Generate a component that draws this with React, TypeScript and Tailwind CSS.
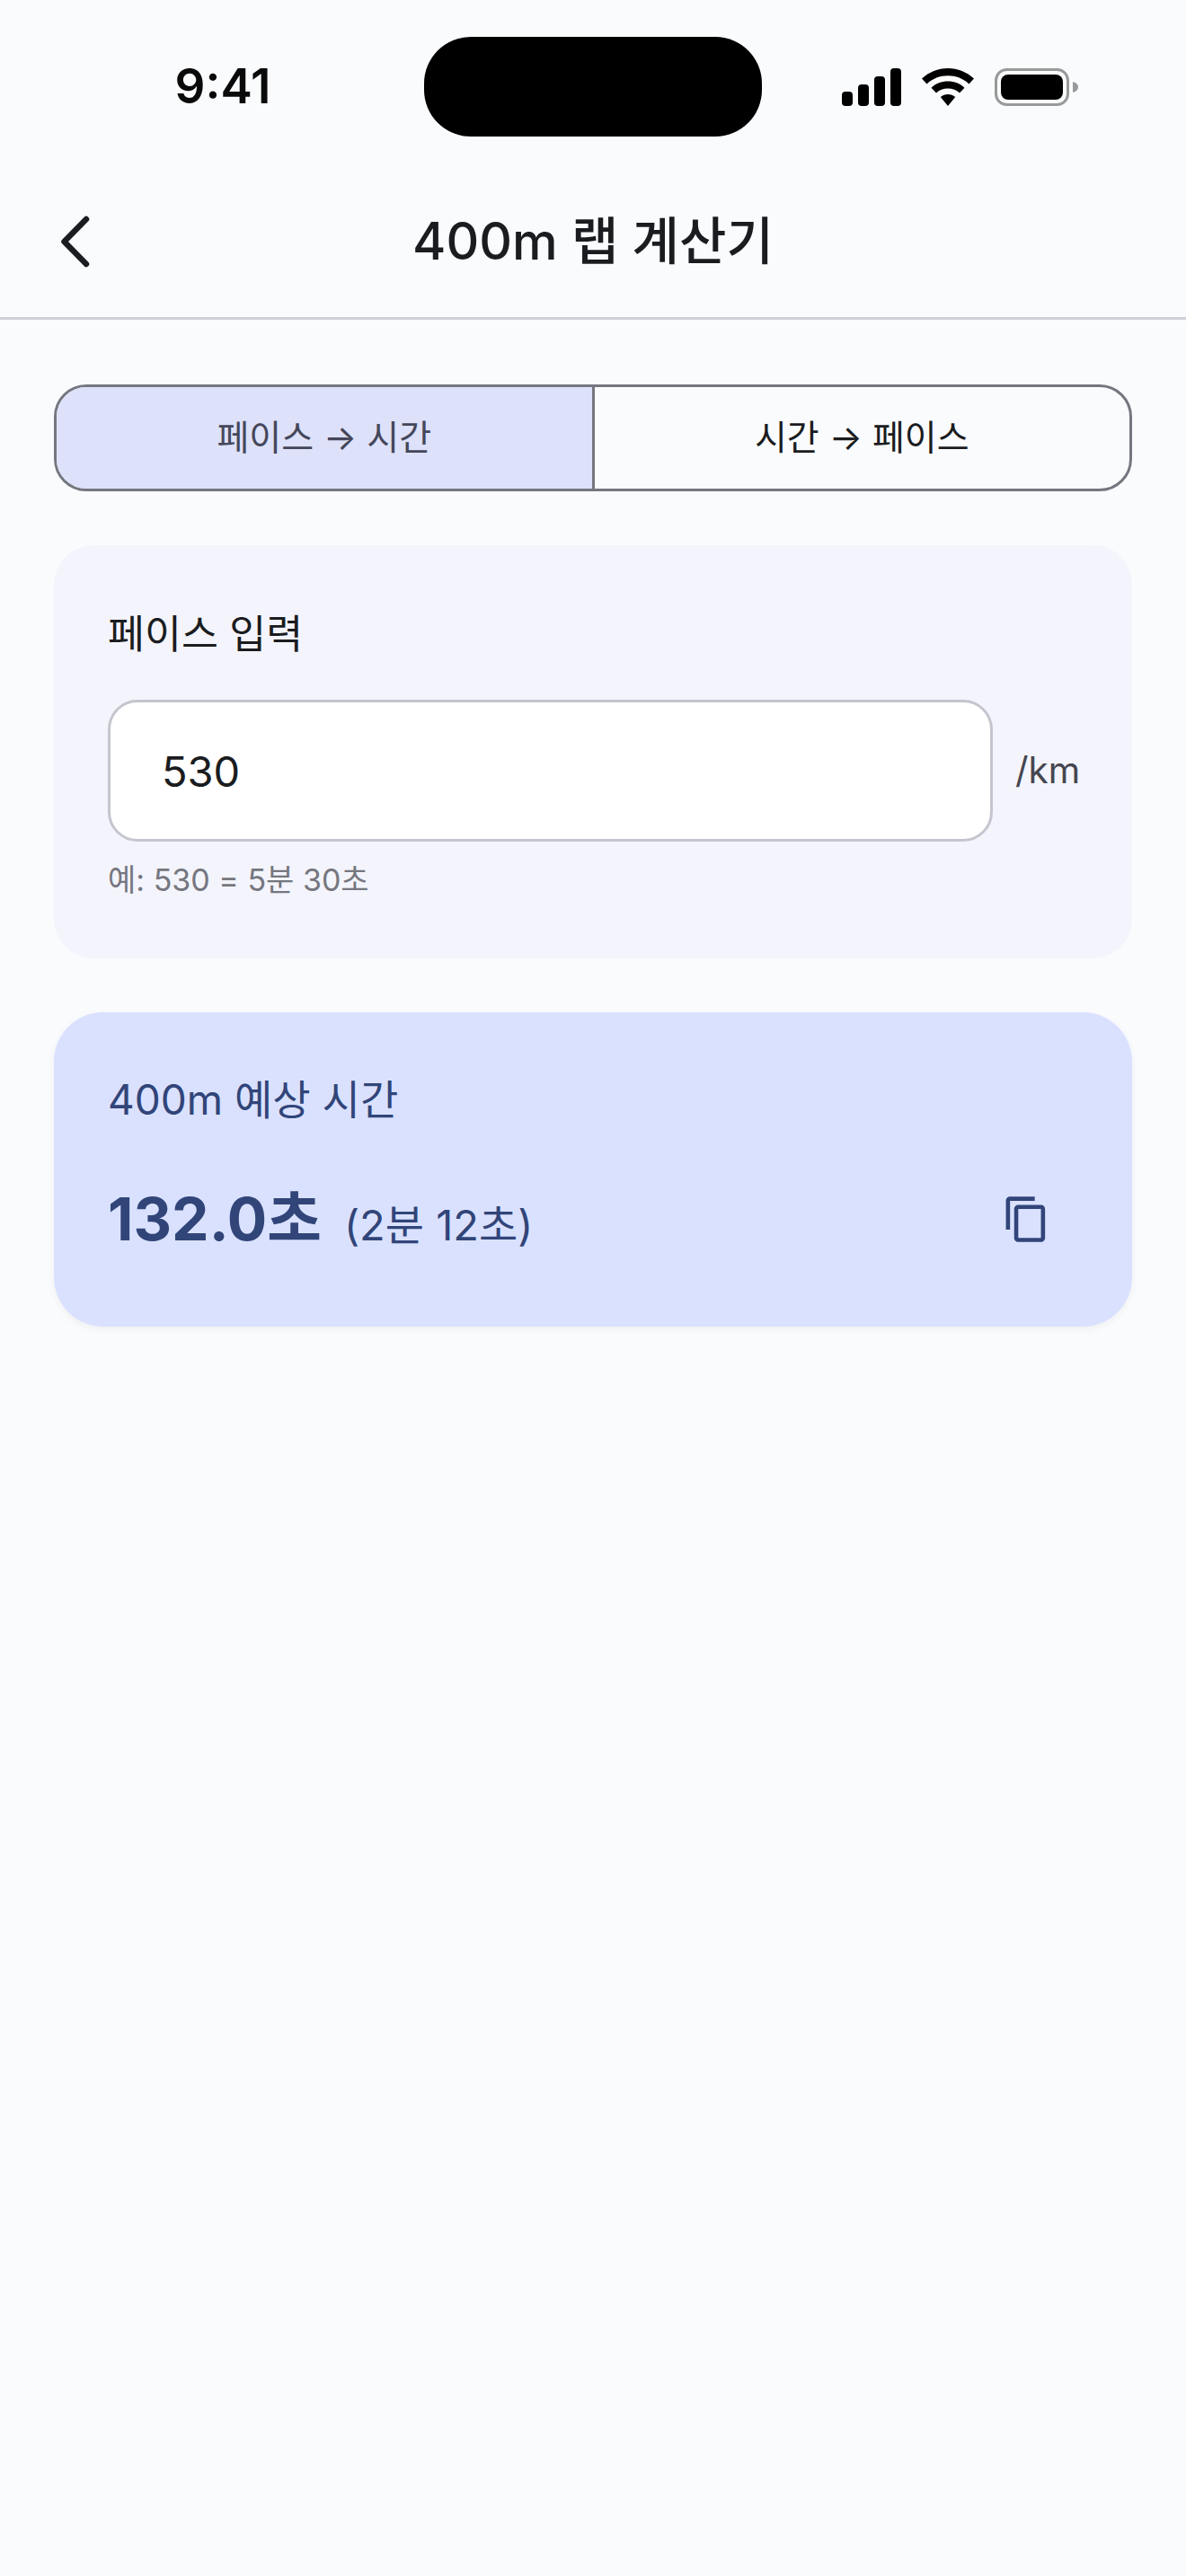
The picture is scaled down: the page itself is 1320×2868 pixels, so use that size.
import React from "react";

const font = "[font-family:Inter,'Noto_Sans_CJK_KR',sans-serif]";

function Signal() {
  return (
    <svg width="66" height="42" viewBox="0 0 66 42" fill="#000">
      <rect x="0" y="26" width="12" height="16" rx="4" />
      <rect x="18" y="18" width="12" height="24" rx="4" />
      <rect x="36" y="9" width="12" height="33" rx="4" />
      <rect x="54" y="0" width="12" height="42" rx="4" />
    </svg>
  );
}

function Wifi() {
  return (
    <svg width="58" height="42" viewBox="0 0 58 42" fill="#000">
      <path d="M29 0C18 0 8 4.200 0 11.500L5.500 17.500C12 11.500 20 8.300 29 8.300S46 11.500 52.500 17.500L58 11.500C50 4.200 40 0 29 0Z" />
      <path d="M29 14.500C22 14.500 15.500 17 10.500 21.700L16 27.500C19.500 24.300 24 22.500 29 22.500S38.500 24.300 42 27.500L47.500 21.700C42.500 17 36 14.500 29 14.500Z" />
      <path d="M29 29C26 29 23 30 20.800 32L29 42L37.200 32C35 30 32 29 29 29Z" />
    </svg>
  );
}

function Battery() {
  return (
    <svg width="94" height="42" viewBox="0 0 94 42">
      <rect x="1.500" y="1.500" width="80" height="39" rx="12" fill="none" stroke="#999" strokeWidth="3" />
      <rect x="7" y="7" width="69" height="28" rx="8" fill="#000" />
      <path d="M87 15C91 16 93 18 93 21S91 26 87 27Z" fill="#999" />
    </svg>
  );
}

function CopyIcon() {
  return (
    <svg width="55" height="55" viewBox="0 0 24 24" fill="#314579">
      <path d="M16 1H4c-1.100 0-2 .9-2 2v14h2V3h12V1zm3 4H8c-1.100 0-2 .9-2 2v14c0 1.100.9 2 2 2h11c1.100 0 2-.9 2-2V7c0-1.100-.9-2-2-2zm0 16H8V7h11v14z" />
    </svg>
  );
}

export default function App() {
  return (
    <div className={`${font} w-[1320px] h-[2868px] bg-[#fafbfd] text-[#1a1c20] overflow-hidden`}>
      <div className="flex h-[194px] pt-[41px]">
        <div className="w-[472px] h-[111px] flex items-center pl-[24px] justify-center">
          <span className="text-[53px] leading-none font-semibold text-[#0a0a0a]">9:41</span>
        </div>
        <div className="w-[376px] h-[111px] rounded-[52px] bg-black" />
        <div className="flex-1 h-[111px] flex items-center gap-[23px] pl-[89px] pt-[1px]">
          <Signal />
          <Wifi />
          <Battery />
        </div>
      </div>

      <div className="flex items-center h-[162px] border-b-[3px] border-[#d0d1d8] pb-[10px]">
        <div className="w-[132px] pl-[68px]">
          <svg width="32" height="58" viewBox="0 0 32 58" fill="none" stroke="#1a1c20" strokeWidth="6.500" strokeLinecap="round" strokeLinejoin="round">
            <path d="M28 4 L3.500 29 L28 54" />
          </svg>
        </div>
        <div className="flex-1 text-center text-[57px] leading-none font-medium">400m 랩 계산기</div>
        <div className="w-[132px]" />
      </div>

      <div className="flex flex-col gap-[60px] px-[60px] pt-[72px]">
        <div className="flex h-[119px] rounded-[36px] border-[3px] border-[#74777f] overflow-hidden text-[39px]">
          <div className="flex-1 flex items-center justify-center bg-[#dde1f9] text-[#44475a] border-r-[3px] border-[#74777f]">페이스 → 시간</div>
          <div className="flex-1 flex items-center justify-center text-[#1a1c20]">시간 → 페이스</div>
        </div>

        <div className="h-[460px] rounded-[44px] bg-[#f4f4fc] px-[60px] pt-[72px]">
          <div className="text-[44.500px] leading-[54px] font-normal">페이스 입력</div>
          <div className="flex items-center gap-[25px] mt-[46px]">
            <input
              readOnly
              value="530"
              className="w-[985px] shrink-0 h-[158px] rounded-[33px] border-[3px] border-[#c5c5cf] bg-white pl-[57px] text-[47px] text-[#1a1c20] outline-none"
            />
            <span className="text-[40.500px] leading-none text-[#45464f]">/km</span>
          </div>
          <div className="text-[34px] leading-[44px] mt-[21px] text-[#75777f]">예: 530 = 5분 30초</div>
        </div>

        <div className="h-[350px] rounded-[55px] bg-[#dae1ff] shadow-[0_3px_8px_rgba(0,0,0,0.05)] px-[60px] pt-[70px] text-[#314579]">
          <div className="text-[46px] leading-[54px] font-normal">400m 예상 시간</div>
          <div className="flex items-center justify-between mt-[66px] pr-[30px]">
            <div className="flex items-baseline gap-[25px]">
              <span className="text-[66px] leading-[80px] font-bold">132.0초</span>
              <span className="text-[47px] leading-none">(2분 12초)</span>
            </div>
            <CopyIcon />
          </div>
        </div>
      </div>
    </div>
  );
}
